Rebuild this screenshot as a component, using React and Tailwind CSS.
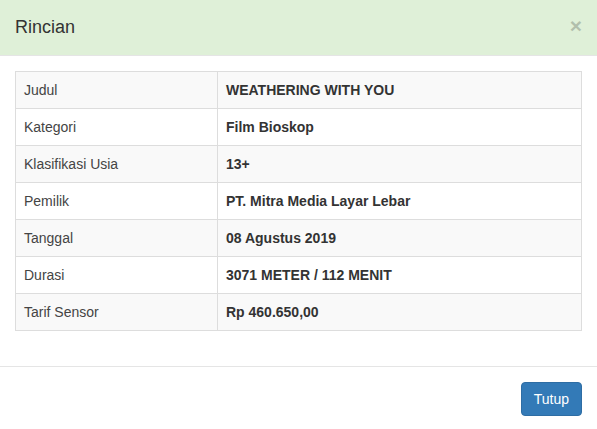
const rows = [
  ['Judul', 'WEATHERING WITH YOU'],
  ['Kategori', 'Film Bioskop'],
  ['Klasifikasi Usia', '13+'],
  ['Pemilik', 'PT. Mitra Media Layar Lebar'],
  ['Tanggal', '08 Agustus 2019'],
  ['Durasi', '3071 METER / 112 MENIT'],
  ['Tarif Sensor', 'Rp 460.650,00'],
];

export default function App() {
  return (
    <div className="min-h-screen bg-white text-[14px] leading-[20px] text-[#333]" style={{ fontFamily: '"Liberation Sans", Arial, sans-serif' }}>
      {/* Header */}
      <div className="flex items-center justify-between bg-[#dff0d8] border-b border-[#e5e5e5] p-[15px]">
        <h4 className="text-[18px] leading-[25px] text-[#333]">Rincian</h4>
        <button type="button" className="text-[21px] font-bold leading-none text-black opacity-20 -mt-[4px]">
          ×
        </button>
      </div>

      {/* Body */}
      <div className="p-[15px]">
        <table className="w-full border-collapse border border-[#ddd] mb-[20px]">
          <tbody>
            {rows.map(([label, value], i) => (
              <tr key={label} className={i % 2 === 0 ? 'bg-[#f9f9f9]' : 'bg-white'}>
                <td className="w-[202px] border border-[#ddd] p-[8px] text-[#444]">{label}</td>
                <td className="border border-[#ddd] p-[8px] font-bold text-[#333]">{value}</td>
              </tr>
            ))}
          </tbody>
        </table>
      </div>

      {/* Footer */}
      <div className="flex justify-end border-t border-[#e5e5e5] p-[15px]">
        <button
          type="button"
          className="bg-[#337ab7] border border-[#2e6da4] text-white rounded-[4px] px-[12px] py-[6px] text-[14px] leading-[20px]"
        >
          Tutup
        </button>
      </div>
    </div>
  );
}
